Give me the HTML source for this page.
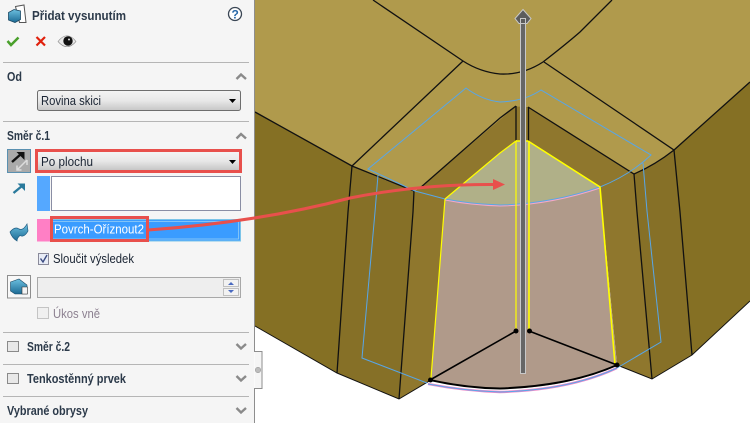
<!DOCTYPE html>
<html><head><meta charset="utf-8"><style>
html,body{margin:0;padding:0;background:#fff;width:750px;height:423px;overflow:hidden}
svg{display:block}
text{font-family:"Liberation Sans",sans-serif;font-size:13px;fill:#1a2433}
.b{font-weight:bold;fill:#2c3a4a}
</style></head><body>
<svg width="750" height="423" viewBox="0 0 750 423" xmlns="http://www.w3.org/2000/svg">
<defs>
<linearGradient id="dd" x1="0" y1="0" x2="0" y2="1"><stop offset="0" stop-color="#f4f4f4"/><stop offset="0.5" stop-color="#e8e8e8"/><stop offset="1" stop-color="#c6c6c6"/></linearGradient>
<linearGradient id="ic" x1="0" y1="0" x2="0" y2="1"><stop offset="0" stop-color="#6cc0e0"/><stop offset="1" stop-color="#1c6a94"/></linearGradient>
</defs>
<rect width="750" height="423" fill="#fff"/>
<!-- model -->
<!-- side faces -->
<path d="M255 112L352 166L348 212L337 373L255 326Z" fill="#857024"/>
<path d="M352 166L385 180L414 191L413 212L399 399L337 373L348 212Z" fill="#867027"/>
<path d="M414 191L420 188L500 118L516 106L528 107L528 141H516L500 153L445 199L431 380L399 399L413 212Z" fill="#8f772d"/>
<path d="M528 107L634 174L637 212L652 379L617 365L600 187L528 141Z" fill="#8f772d"/>
<path d="M634 174L660 160L674 150L680 212L692 355L652 379L637 212Z" fill="#867027"/>
<path d="M674 150L750 82V301L692 355L680 212Z" fill="#857024"/>
<!-- top -->
<path d="M255 0H612L580 32L543 62L528 107L634 174L660 160L674 150L750 82V0Z" fill="#b09a4c"/>
<path d="M255 0V112L352 166L385 180L414 191L420 188L500 118L516 106L528 107L634 174L660 160L674 150L544 62L523 72L500 74L463 61L373 0Z" fill="#b09a4c"/>
<path d="M463 61Q480 72 500 74Q523 75 543 62L674 150L634 174L528 107L516 106L420 188L352 166Z" fill="#b09a4c"/>
<path d="M373 0L463 61Q480 72 500 74Q523 75 543 62Q565 45 580 32L612 0Z" fill="#b09a4c"/>
<!-- cut faces -->
<path d="M445 199L500 153L516 141H528L600 187Q550 204 500 205Q470 204 445 199Z" fill="#b0b088"/>
<path d="M445 199Q470 204 500 205Q550 204 600 187L617 365Q570 388 500 389Q465 388 431 380Z" fill="#b09a8a"/>
<!-- black edges -->
<g fill="none" stroke="#111" stroke-width="1.300">
<path d="M255 112L352 166L414 191"/>
<path d="M373 0L463 61Q480 72 500 74Q523 75 543 62Q565 45 580 32L612 0"/>
<path d="M463 61L352 166"/>
<path d="M544 62L674 150L750 82"/>
<path d="M674 150Q655 165 634 174L528 107"/>
<path d="M420 188L500 118L516 106"/>
<path d="M352 166L348 212L337 373"/>
<path d="M414 191L413 212L399 399"/>
<path d="M674 150L680 212L692 355"/>
<path d="M634 174L637 212L652 379"/>
<path d="M516 106V141M528.5 107V141"/>
<path d="M255 326L337 373L399 399L431 380" stroke-width="1"/>
<path d="M617 365L652 379L692 355L750 301" stroke-width="1"/>
</g>
<!-- blue contour -->
<g fill="none" stroke="#58a6e8" stroke-width="1">
<path d="M466 88L368 169L415 191L445 199Q470 204 500 205Q550 204 600 187Q630 175 651 155L541 90Q525 101 500 102Q482 100 466 88Z"/>
<path d="M378 175L375 212L362 358L427 383"/>
<path d="M643 163L647 211L661 342L617 368"/>
<path d="M428 384Q465 391 500 392Q570 390 617 368" stroke="#f08ac8" stroke-width="2.400"/>
<path d="M428 384Q465 391 500 392Q570 390 617 368"/>
<path d="M445 200Q470 205 500 206Q550 205 600 188" stroke="#f4a8c8"/>
</g>
<!-- yellow -->
<g fill="none" stroke="#ffff00">
<path d="M445 199L431 378M445 199L500 153L516 141V329" stroke-width="1.200"/>
<path d="M516 141H528L600 187L615 364M529 141V329" stroke-width="1.600"/>
</g>
<!-- bottom black -->
<g fill="none" stroke="#000" stroke-width="1.600">
<path d="M430 380Q465 388 500 388.500Q570 386 617 365" stroke-width="2"/>
<path d="M430 380L516 331M529 331L617 365"/>
</g>
<g fill="#000"><circle cx="430.500" cy="380" r="2.500"/><circle cx="516" cy="331" r="2.500"/><circle cx="529.500" cy="331" r="2.500"/><circle cx="617" cy="365" r="2.500"/></g>
<!-- axis -->
<rect x="520.500" y="22" width="5" height="351.500" fill="#666" stroke="#c8c8c8"/>
<path d="M523 9.500L531 18.500L527 23.500H519L515 18.500Z" fill="#5c5c5c" stroke="#c8c8c8"/>
<rect x="520.500" y="18.500" width="5" height="5" fill="#5c5c5c" stroke="#c8c8c8"/>
<!-- panel -->
<rect x="0" y="0" width="254" height="423" fill="#f5f5f5"/>
<path d="M254.500 0V351.500H262V388.500H254.500V423" fill="#f5f5f5" stroke="#8e8e8e"/>
<circle cx="258" cy="370" r="2.700" fill="#bcbcbc" stroke="#9a9a9a" stroke-width="0.600"/>
<g stroke="#b5b5b5"><path d="M3 62.500H249M3 121.500H249M3 332.500H249M3 364.500H249M3 396.500H249"/></g>
<!-- header icon -->
<path d="M15.500 6.500L24 5L26 22.500H19.500Z" fill="#fff" stroke="#555"/>
<path d="M8.500 12.500L14 9.500L20.500 11V19.500L15 22.500L8.500 20Z" fill="url(#ic)" stroke="#1c4a66" stroke-width="0.800"/>
<text x="32" y="20" class="b" textLength="94" lengthAdjust="spacingAndGlyphs">Přidat vysunutím</text>
<circle cx="235" cy="14" r="6.500" fill="#fff" stroke="#3a4654" stroke-width="1.300"/>
<text x="231.500" y="18.500" style="font-size:12px;font-weight:bold;fill:#2868a8">?</text>
<path d="M7.500 41L11 45L18.500 37.500" fill="none" stroke="#4aa02c" stroke-width="2.500"/>
<path d="M36.500 37L45 45.500M45 37L36.500 45.500" fill="none" stroke="#e0200c" stroke-width="2.200"/>
<path d="M58 41.500Q67 30 76 41.500Q67 52 58 41.500Z" fill="#e8e8e8" stroke="#888" stroke-width="0.600"/>
<circle cx="68" cy="41" r="4.700" fill="#111"/><circle cx="69" cy="39.500" r="1" fill="#ddd"/>
<!-- Od -->
<text x="7" y="81" class="b" textLength="15" lengthAdjust="spacingAndGlyphs">Od</text>
<path d="M236.500 79L241 74.500L246 79" fill="none" stroke="#8a8a8a" stroke-width="2.400"/>
<rect x="37.500" y="90.500" width="203" height="20" rx="2" fill="url(#dd)" stroke="#6e6e6e"/>
<text x="41" y="105" textLength="60" lengthAdjust="spacingAndGlyphs">Rovina skici</text>
<path d="M229 99H236L232.500 103Z" fill="#000"/>
<!-- Smer 1 -->
<text x="7" y="140" class="b" textLength="43" lengthAdjust="spacingAndGlyphs">Směr č.1</text>
<path d="M236.500 138.500L241 134L246 138.500" fill="none" stroke="#8a8a8a" stroke-width="2.400"/>
<rect x="7.500" y="149.500" width="23" height="23" fill="#aaa" stroke="#5a90b0"/>
<path d="M17 170L27 160M21.500 170H17V165.500M27 160V165" fill="none" stroke="#ddd" stroke-width="1.500"/>
<path d="M12 162L21 154" fill="none" stroke="#111" stroke-width="2.400"/>
<path d="M16.500 152H24.500V160Z" fill="#111"/>
<rect x="38" y="152" width="202" height="18" fill="url(#dd)"/>
<text x="41" y="166" textLength="52" lengthAdjust="spacingAndGlyphs">Po plochu</text>
<path d="M229 160H236L232.500 164Z" fill="#000"/>
<rect x="36.500" y="150.500" width="204" height="21" fill="none" stroke="#e8504c" stroke-width="3"/>
<path d="M13.500 193L22 186" fill="none" stroke="#2a7a9c" stroke-width="2.400"/>
<path d="M17.500 183.500H25V191Z" fill="#2a7a9c"/>
<rect x="37" y="176" width="13" height="35" fill="#55a8ff"/>
<rect x="51.500" y="176.500" width="189" height="34" fill="#fff" stroke="#8a8ea4"/>
<path d="M10 232Q15 226 19 229Q23 231 27 224L28 231Q24 238 20 235.500Q17 238 17 241Q12 238 10 232Z" fill="url(#ic)" stroke="#1c5a80" stroke-width="0.700"/>
<rect x="37" y="219" width="13" height="22.500" fill="#ff7fc5"/>
<rect x="50.500" y="219.500" width="190" height="21.500" fill="#3a9cff" stroke="#7cc4e8"/>
<rect x="52.500" y="221.500" width="186" height="17.500" fill="none" stroke="#a0d4f4" stroke-width="0.700"/>
<text x="54" y="233.500" style="fill:#fff" textLength="90" lengthAdjust="spacingAndGlyphs">Povrch-Oříznout2</text>
<rect x="51.500" y="217.500" width="96" height="23" fill="none" stroke="#e8504c" stroke-width="3"/>
<!-- Sloucit -->
<rect x="38.500" y="253.500" width="10" height="11" fill="#e8ecf6" stroke="#8a8a9a"/>
<path d="M40.500 258.500L43 262L47 255" fill="none" stroke="#3a4a80" stroke-width="1.400"/>
<text x="53" y="263" textLength="81" lengthAdjust="spacingAndGlyphs">Sloučit výsledek</text>
<!-- depth -->
<rect x="7.500" y="275.500" width="23" height="22.500" fill="#f8f8f8" stroke="#8e8e8e"/>
<path d="M10.500 282L19 279L27 285V294H15L10.500 291Z" fill="url(#ic)" stroke="#1c4a66" stroke-width="0.600"/>
<path d="M22 287H27.500V294H22Z" fill="#f4f4f4" stroke="#333" stroke-width="0.600"/>
<rect x="37.500" y="277.500" width="203" height="20" fill="#eee" stroke="#a8a8a8"/>
<rect x="223.500" y="279.500" width="15" height="7" fill="#f2f2f2" stroke="#c0c0c0"/>
<rect x="223.500" y="288.500" width="15" height="7" fill="#f2f2f2" stroke="#c0c0c0"/>
<path d="M228 285H234L231 282Z" fill="#4a6ac0"/><path d="M228 290H234L231 293Z" fill="#4a6ac0"/>
<rect x="37.500" y="307.500" width="11" height="11" fill="#f0f0f0" stroke="#c4c4c4"/>
<text x="53" y="318" style="fill:#8c8090" textLength="47" lengthAdjust="spacingAndGlyphs">Úkos vně</text>
<!-- collapsed -->
<rect x="7.500" y="341.500" width="11" height="10" fill="#e8e8e8" stroke="#8a8a8a"/>
<text x="27" y="351" class="b" textLength="43" lengthAdjust="spacingAndGlyphs">Směr č.2</text>
<path d="M236.500 344L241 348.500L246 344" fill="none" stroke="#8a8a8a" stroke-width="2.400"/>
<rect x="7.500" y="373.500" width="11" height="10" fill="#e8e8e8" stroke="#8a8a8a"/>
<text x="27" y="383" class="b" textLength="99" lengthAdjust="spacingAndGlyphs">Tenkostěnný prvek</text>
<path d="M236.500 376L241 380.500L246 376" fill="none" stroke="#8a8a8a" stroke-width="2.400"/>
<text x="7" y="415" class="b" textLength="81" lengthAdjust="spacingAndGlyphs">Vybrané obrysy</text>
<path d="M236.500 408L241 412.500L246 408" fill="none" stroke="#8a8a8a" stroke-width="2.400"/>
<!-- red arrow -->
<path d="M148 230Q260 222 350 198Q420 184 494 184.500" fill="none" stroke="#e8504c" stroke-width="3"/>
<path d="M493 179L505 184.500L493 190Z" fill="#e8504c"/>
</svg>
</body></html>
